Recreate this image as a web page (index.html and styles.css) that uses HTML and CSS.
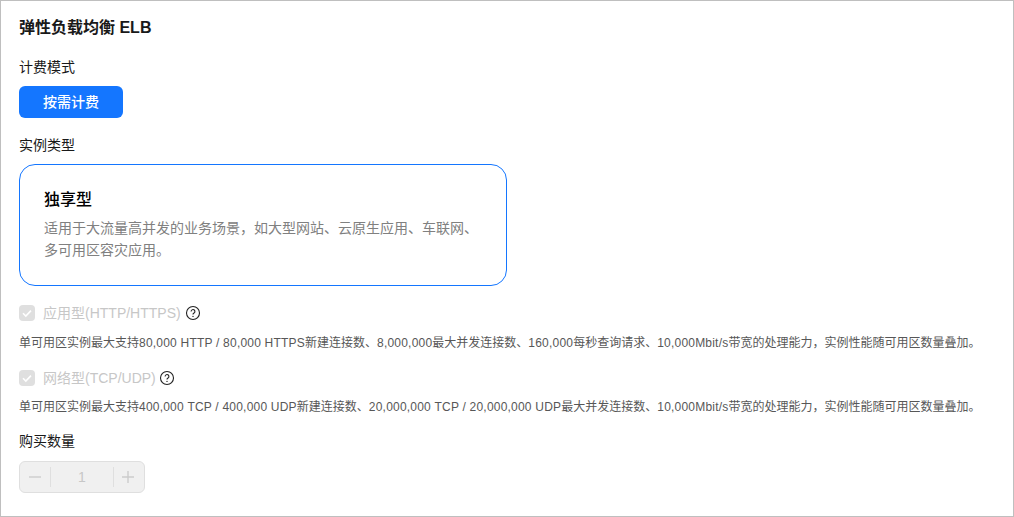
FILE: index.html
```html
<!DOCTYPE html>
<html lang="zh-CN">
<head>
<meta charset="utf-8">
<title>弹性负载均衡 ELB</title>
<link rel="stylesheet" href="styles.css">
</head>
<body>
<main class="frame">
  <h1 class="title">弹性负载均衡 ELB</h1>
  <div class="label label-billing">计费模式</div>
  <button class="pay-btn" type="button">按需计费</button>
  <div class="label label-type">实例类型</div>
  <section class="card">
    <h2 class="card-title">独享型</h2>
    <p class="card-desc">适用于大流量高并发的业务场景，如大型网站、云原生应用、车联网、<br>多可用区容灾应用。</p>
  </section>
  <div class="check-row check-first">
    <span class="check"><svg width="16" height="16" viewBox="0 0 16 16"><path d="M4 8.2l2.8 2.8L12 5.6" fill="none" stroke="#fff" stroke-width="1.6"/></svg></span>
    <span class="check-label">应用型(HTTP/HTTPS)</span>
    <svg class="help" width="16" height="16" viewBox="0 0 16 16"><circle cx="8" cy="8" r="6.5" fill="none" stroke="#222" stroke-width="1.1"/><path d="M6.1 6.5a1.9 1.9 0 1 1 2.9 1.6c-.7.4-1 .8-1 1.5" fill="none" stroke="#222" stroke-width="1.1"/><circle cx="8" cy="11.4" r=".7" fill="#222"/></svg>
  </div>
  <p class="spec">单可用区实例最大支持<span class="lat">80,000 HTTP / 80,000 HTTPS</span>新建连接数、<span class="lat">8,000,000</span>最大并发连接数、<span class="lat">160,000</span>每秒查询请求、<span class="lat">10,000Mbit/s</span>带宽的处理能力，实例性能随可用区数量叠加。</p>
  <div class="check-row check-second">
    <span class="check"><svg width="16" height="16" viewBox="0 0 16 16"><path d="M4 8.2l2.8 2.8L12 5.6" fill="none" stroke="#fff" stroke-width="1.6"/></svg></span>
    <span class="check-label">网络型(TCP/UDP)</span>
    <svg class="help help-tight" width="16" height="16" viewBox="0 0 16 16"><circle cx="8" cy="8" r="6.5" fill="none" stroke="#222" stroke-width="1.1"/><path d="M6.1 6.5a1.9 1.9 0 1 1 2.9 1.6c-.7.4-1 .8-1 1.5" fill="none" stroke="#222" stroke-width="1.1"/><circle cx="8" cy="11.4" r=".7" fill="#222"/></svg>
  </div>
  <p class="spec spec-second">单可用区实例最大支持<span class="lat">400,000 TCP / 400,000 UDP</span>新建连接数、<span class="lat">20,000,000 TCP / 20,000,000 UDP</span>最大并发连接数、<span class="lat">10,000Mbit/s</span>带宽的处理能力，实例性能随可用区数量叠加。</p>
  <div class="label label-qty">购买数量</div>
  <div class="stepper">
    <span class="step-btn"><svg width="14" height="14" viewBox="0 0 14 14"><path d="M1 7h12" stroke="#ccc" stroke-width="1.4"/></svg></span>
    <span class="step-val">1</span>
    <span class="step-btn step-plus"><svg width="14" height="14" viewBox="0 0 14 14"><path d="M1 7h12M7 1v12" stroke="#ccc" stroke-width="1.4"/></svg></span>
  </div>
</main>
</body>
</html>
```
FILE: styles.css
```css
* { box-sizing: border-box; }
html, body { margin: 0; padding: 0; background: #fff; }
body {
  font-family: "Liberation Sans", "Noto Sans CJK SC", sans-serif;
  color: #191919;
}
.frame {
  width: 1014px;
  height: 517px;
  border: 1px solid #bfbfbf;
  padding: 16px 0 0 18px;
  overflow: hidden;
}
.title { margin: 0; font-size: 16px; line-height: 22px; font-weight: 700; color: #191919; }
.label { font-size: 14px; line-height: 20px; color: #191919; }
.label-billing { margin-top: 18px; }
.pay-btn {
  display: block;
  width: 104px;
  height: 32px;
  margin: 9px 0 0;
  padding: 0;
  border: 0;
  border-radius: 6px;
  background: #1476ff;
  color: #fff;
  font: 500 14px/32px "Liberation Sans", "Noto Sans CJK SC", sans-serif;
}
.label-type { margin-top: 17px; }
.card {
  width: 488px;
  height: 122px;
  margin-top: 9px;
  padding: 24px 24px 0;
  border: 1px solid #1476ff;
  border-radius: 16px;
}
.card-title { margin: 0; font-size: 16px; line-height: 22px; font-weight: 500; color: #000; }
.card-desc { margin: 6px 0 0; font-size: 14px; line-height: 22px; color: #808080; white-space: nowrap; }
.check-row { display: flex; align-items: center; height: 20px; }
.check-first { margin-top: 17px; }
.check-second { margin-top: 16px; }
.check {
  display: block;
  width: 16px;
  height: 16px;
  border-radius: 4px;
  background: #dfdfdf;
}
.check svg { display: block; }
.check-label { margin-left: 8px; font-size: 14px; line-height: 20px; color: #c7c7c7; }
.help { margin-left: 4px; }
.help-tight { margin-left: 3px; }
.spec { margin: 11px 0 0; font-size: 12px; line-height: 18px; color: #575757; white-space: nowrap; }
.spec-second { margin-top: 10px; }
.lat { letter-spacing: .21px; }
.label-qty { margin-top: 15px; }
.stepper {
  display: flex;
  align-items: center;
  width: 126px;
  height: 32px;
  margin-top: 10px;
  border: 1px solid #dfdfdf;
  border-radius: 6px;
  background: #f0f0f0;
}
.step-btn { display: flex; align-items: center; justify-content: center; width: 30px; height: 100%; }
.step-plus { padding-right: 2px; }
.step-val {
  flex: 1;
  height: 20px;
  border-left: 1px solid #dfdfdf;
  border-right: 1px solid #dfdfdf;
  text-align: center;
  font-size: 14px;
  line-height: 20px;
  color: #c7c7c7;
}
```
